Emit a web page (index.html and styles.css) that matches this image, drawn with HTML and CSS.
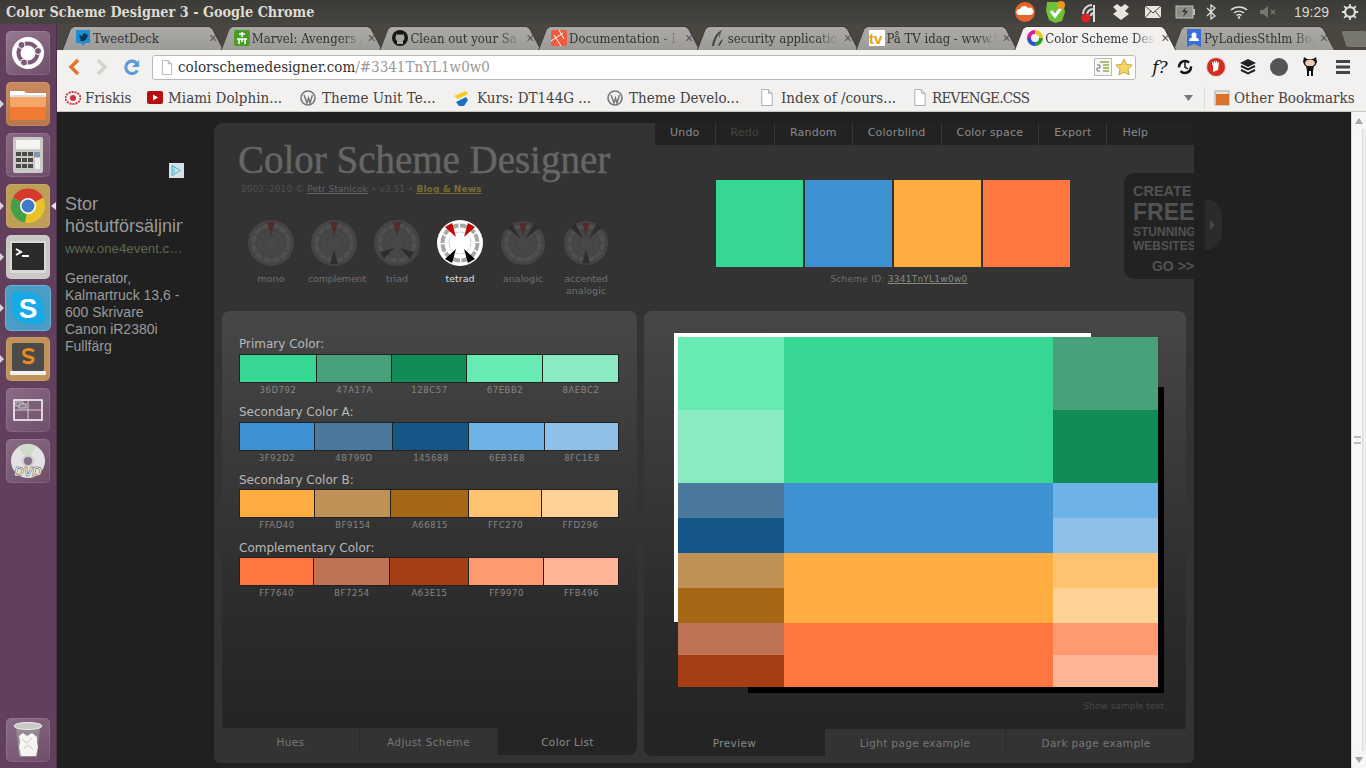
FILE: index.html
```html
<!DOCTYPE html>
<html lang="en">
<head>
<meta charset="utf-8">
<title>Color Scheme Designer 3</title>
<link rel="stylesheet" href="styles.css">
</head>
<body>
<svg class="defs" width="0" height="0" aria-hidden="true">
  <defs>
    <g id="wheel-base">
      <circle class="wb" r="23"/>
      <circle class="wr" r="17.5" pathLength="72" stroke-dasharray="5 1"/>
      <circle class="wi" r="11" pathLength="72" stroke-dasharray="5 1"/>
      <circle class="wc" r="6"/>
    </g>
  </defs>
  <symbol id="i-wp" viewBox="0 0 16 16">
    <circle cx="8" cy="8" r="7" fill="none" stroke="#777" stroke-width="1.6"/>
    <path d="M4 5l3 8 1.5-5 1.500 5 2.500-8" fill="none" stroke="#777" stroke-width="1.500"/>
  </symbol>
  <symbol id="i-page" viewBox="0 0 14 18">
    <path d="M1.500.5h7l4 4v13h-11z" fill="#fff" stroke="#aaa"/>
    <path d="M8.500.5v4h4" fill="#ddd" stroke="#aaa"/>
  </symbol>
</svg>

<div class="screen">
  <header class="topbar">
    <div class="wintitle">Color Scheme Designer 3 - Google Chrome</div>
    <div class="tray">
      <svg class="t1" width="22" height="22" viewBox="0 0 22 22"><circle cx="11" cy="11" r="10" fill="#e8622b"/><path d="M5 14a3 3 0 0 1 1-6 4.500 4.500 0 0 1 8-1 3.500 3.500 0 0 1 3 7z" fill="#fff"/></svg>
      <svg class="t2" width="22" height="24" viewBox="0 0 22 24"><path d="M2 2h16l2 10-3 9-7 2-6-3-3-9z" fill="#6fc13a"/><path d="M6 11l4 5 6-8" fill="none" stroke="#fff" stroke-width="3"/><circle cx="16" cy="5" r="4" fill="#e89a1e"/></svg>
      <svg class="t3" width="20" height="22" viewBox="0 0 20 22"><path d="M3 13a9 9 0 0 1 9-9M7 14a6 6 0 0 1 6-6M11 15a3 3 0 0 1 3-3M14 4v17" fill="none" stroke="#ddd" stroke-width="2"/><circle cx="6" cy="17" r="4.500" fill="#d22"/></svg>
      <svg class="t4" width="18" height="18" viewBox="0 0 18 18"><path d="M1 4l4-3 4 3 4-3 4 3-4 4 4 3-4 3-4 3-4-3-4-3 4-3z" fill="#e8e6df"/></svg>
      <svg class="t5" width="18" height="14" viewBox="0 0 18 14"><rect x="1" y="1" width="16" height="12" fill="#e8e6df"/><path d="M1 1l8 7 8-7M1 13l6-7M17 13l-6-7" fill="none" stroke="#4a4842"/></svg>
      <svg class="t6" width="21" height="14" viewBox="0 0 21 14"><rect x="1" y="1" width="17" height="12" fill="#8d8c85" stroke="#bbb"/><rect x="18" y="4" width="2" height="6" fill="#bbb"/><path d="M11 2l-4 5h3l-2 5 5-6h-3z" fill="#333"/></svg>
      <svg class="t7" width="10" height="16" viewBox="0 0 10 16"><path d="M1 4l8 8-4 3V1l4 3-8 8" fill="none" stroke="#ddd" stroke-width="1.300"/></svg>
      <svg class="t8" width="18" height="14" viewBox="0 0 18 14"><path d="M1 5a12 12 0 0 1 16 0M4 8a8 8 0 0 1 10 0M6.500 10.500a4 4 0 0 1 5 0" fill="none" stroke="#ddd" stroke-width="1.600"/><circle cx="9" cy="12.500" r="1.300" fill="#ddd"/></svg>
      <svg class="t9" width="18" height="14" viewBox="0 0 18 14"><path d="M1 5h3l5-4v12l-5-4H1z" fill="#77766f"/><path d="M12 5l4 4M16 5l-4 4" stroke="#77766f" stroke-width="1.300"/></svg>
      <span class="clock">19:29</span>
      <svg class="t10" width="18" height="20" viewBox="-10 -10 20 20"><circle r="5.500" fill="none" stroke="#ddd" stroke-width="2.500"/><path d="M0-9v4M0 9V5M-9 0h4M9 0H5M-6.500-6.500l3 3M6.500-6.500l-3 3M-6.500 6.500l3-3M6.500 6.500l-3-3" stroke="#ddd" stroke-width="2"/></svg>
    </div>
  </header>

  <div class="main">
    <nav class="launcher">
      <div class="tile tile-ubuntu"><svg width="34" height="34" viewBox="-17 -17 34 34"><circle r="16" fill="#fff"/><circle r="9.500" fill="none" stroke="#7c5a76" stroke-width="4"/><circle cx="10" cy="-2" r="3.500" fill="#7c5a76" stroke="#fff"/><circle cx="-6.500" cy="-8" r="3.500" fill="#7c5a76" stroke="#fff"/><circle cx="-4" cy="9.500" r="3.500" fill="#7c5a76" stroke="#fff"/></svg></div>
      <div class="tile tile-orange run"><svg width="38" height="34" viewBox="0 0 38 34"><path d="M1 4h14l2 2h20v4H1z" fill="#fff"/><rect x="2" y="8" width="34" height="3" fill="#ddd"/><rect x="1" y="10" width="36" height="23" rx="2" fill="#ee7a33"/><rect x="1" y="10" width="36" height="10" rx="2" fill="#f6a768"/></svg></div>
      <div class="tile tile-plain"><svg width="34" height="38" viewBox="0 0 34 38"><rect x="2" y="1" width="30" height="36" rx="2" fill="#c9c9c6"/><rect x="5" y="4" width="24" height="9" fill="#f4f4f2"/><g fill="#4a4a48"><rect x="5" y="16" width="5" height="4"/><rect x="11" y="16" width="5" height="4"/><rect x="17" y="16" width="5" height="4"/><rect x="5" y="22" width="5" height="4"/><rect x="11" y="22" width="5" height="4"/><rect x="17" y="22" width="5" height="4"/><rect x="5" y="28" width="5" height="4"/><rect x="11" y="28" width="5" height="4"/><rect x="17" y="28" width="5" height="4"/></g><rect x="23" y="16" width="6" height="5" fill="#7f99a8"/><rect x="24" y="22" width="5" height="11" fill="#eee"/></svg></div>
      <div class="tile tile-gold run run-both"><svg width="36" height="36" viewBox="-18 -18 36 36"><circle r="17" fill="#e8c22a"/><path d="M0 0L-15-8.500A17 17 0 0 1 15-8.500z" fill="#d63a2c"/><path d="M0 0L-15-8.500A17 17 0 0 0-3 16.700z" fill="#43a047"/><circle r="8" fill="#fff"/><circle r="6.500" fill="#3f7bc8"/></svg></div>
      <div class="tile tile-light run"><svg width="36" height="32" viewBox="0 0 36 32"><rect x="0" y="0" width="36" height="32" fill="#d9d9d6"/><rect x="2" y="2" width="32" height="27" fill="#2b2b2b"/><path d="M6 8l5 3-5 3" fill="none" stroke="#fff" stroke-width="2"/><rect x="12" y="14" width="7" height="2" fill="#fff"/></svg></div>
      <div class="tile tile-blue run"><svg width="38" height="38" viewBox="0 0 38 38"><circle cx="19" cy="19" r="16" fill="#17a9e8"/><circle cx="10" cy="10" r="8" fill="#17a9e8"/><circle cx="28" cy="28" r="8" fill="#17a9e8"/><text class="skype" x="19" y="29" text-anchor="middle">S</text></svg></div>
      <div class="tile tile-tan run"><svg width="38" height="36" viewBox="0 0 38 36"><rect x="3" y="2" width="32" height="28" rx="2" fill="#4a4a4a"/><rect x="1" y="30" width="36" height="4" rx="1" fill="#f0f0ee"/><path d="M25 10c-6-3-12-1-10 3s10 2 9 6-7 3-10 1" fill="none" stroke="#f08a1d" stroke-width="3"/></svg></div>
      <div class="tile tile-plain"><svg width="30" height="22" viewBox="0 0 30 22"><rect x="1" y="1" width="28" height="20" fill="none" stroke="#fff" stroke-width="1.500"/><path d="M15 1v20M1 11h28" stroke="#d8cdd6"/><rect x="3" y="3" width="7" height="4" fill="none" stroke="#ccc"/><rect x="6" y="5" width="7" height="4" fill="#8d7a8a" stroke="#ccc"/></svg></div>
      <div class="tile tile-plain"><svg width="36" height="38" viewBox="-18 -19 36 38"><circle r="17" fill="#e2e2e2"/><path d="M0 0L-10-14A17 17 0 0 1 8-15z" fill="#cfdcc8"/><circle r="5" fill="#86708a" stroke="#ccc" stroke-width="2"/><text class="dvd" x="0" y="15" text-anchor="middle">DVD</text></svg></div>
      <div class="tile tile-plain tile-trash"><svg width="32" height="38" viewBox="0 0 32 38"><path d="M4 7h24l-3 29H7z" fill="#a9aca6" opacity=".55"/><path d="M7 15l4-3 4 3 5-3 5 4 0 6 1 4-2 9H9l-2-9 1-5z" fill="#f4f4f2"/><path d="M10 18l5 4 5-5M12 27l5-3 4 5" fill="none" stroke="#c9c9c6"/><ellipse cx="16" cy="5" rx="14" ry="3.500" fill="#c7cac4" stroke="#eee"/></svg></div>
    </nav>

    <div class="browser">
      <div class="tabstrip">
        <div class="tab"><svg class="fav" width="16" height="18" viewBox="0 0 16 18"><path d="M1 1h14v13h-5l-2 3-2-3H1z" fill="#1a8fd6"/><path d="M12.500 5c-1 .5-2 .2-2.500-.5-1-.5-3 .5-2 2.500-2 0-3-1-3.500-2-.5 2 0 3 1 4l-1 0c.5 1 1 1.500 2 2-1 .5-1.500.5-2 .5 3 1.500 7 .5 8-4z" fill="#10344f"/></svg><span class="tab-t">TweetDeck</span><span class="tab-x">×</span></div>
        <div class="tab"><svg class="fav" width="16" height="16" viewBox="0 0 16 16"><rect width="16" height="16" rx="2" fill="#4b9e24"/><path d="M8 2v5M5 4h6M3 9h10M5 9v5M11 9v5M8 9v3" stroke="#fff" stroke-width="1.600"/></svg><span class="tab-t tab-fade">Marvel: Avengers /</span><span class="tab-x">×</span></div>
        <div class="tab"><svg class="fav" width="16" height="16" viewBox="0 0 16 16"><circle cx="8" cy="8" r="8" fill="#161616"/><path d="M5 14v-3c-1-1-1.500-2-1.500-3.500 0-.8.300-1.500.7-2V4l1.800.7c.6-.2 1.300-.3 2-.3s1.400.1 2 .3L11.800 4v1.500c.4.500.7 1.200.7 2 0 1.500-.5 2.500-1.500 3.500v3z" fill="#a6a5a1"/></svg><span class="tab-t tab-fade">Clean out your Sa</span><span class="tab-x">×</span></div>
        <div class="tab"><svg class="fav" width="16" height="16" viewBox="0 0 16 16"><rect width="16" height="16" rx="2" fill="#ef5b3c"/><path d="M0 11L12 3M3 5l7 11M8 0l5 9" stroke="#fff" fill="none"/></svg><span class="tab-t tab-fade">Documentation - L</span><span class="tab-x">×</span></div>
        <div class="tab"><svg class="fav" width="16" height="18" viewBox="0 0 16 18"><path d="M2 17C3 9 7 3 12 1c-2 3-2 6-2 8-1-1-1-3 0-5-3 3-5 8-6 13zM8 17c1-3 3-6 5-7-1 3-2 5-4 7z" fill="#444"/></svg><span class="tab-t tab-fade">security applicatio</span><span class="tab-x">×</span></div>
        <div class="tab"><svg class="fav" width="16" height="16" viewBox="0 0 16 16"><rect width="16" height="16" fill="#fff"/><text class="tvfav" x="0" y="14">tv</text></svg><span class="tab-t tab-fade">På TV idag - www.t</span><span class="tab-x">×</span></div>
        <div class="tab tab-on"><svg class="fav" width="16" height="16" viewBox="-8 -8 16 16"><path d="M0-8A8 8 0 0 1 8 0H4A4 4 0 0 0 0-4z" fill="#e8c81e"/><path d="M8 0A8 8 0 0 1 0 8V4A4 4 0 0 0 4 0z" fill="#2aa12a"/><path d="M0 8A8 8 0 0 1-8 0h4A4 4 0 0 0 0 4z" fill="#2a4fd0"/><path d="M-8 0A8 8 0 0 1 0-8v4A4 4 0 0 0-4 0z" fill="#d3229a"/></svg><span class="tab-t tab-fade">Color Scheme Desi</span><span class="tab-x">×</span></div>
        <div class="tab"><svg class="fav" width="16" height="18" viewBox="0 0 16 18"><path d="M1 0h14v18l-7-3-7 3z" fill="#3a6fd8"/><circle cx="8" cy="6" r="2.500" fill="#fff"/><path d="M3 12a5 4 0 0 1 10 0z" fill="#fff"/></svg><span class="tab-t tab-fade">PyLadiesSthlm Boa</span><span class="tab-x">×</span></div>
        <div class="tab-new"></div>
      </div>

      <div class="toolbar">
        <svg class="tb-back" width="14" height="20" viewBox="0 0 14 20"><path d="M11 3L4 10l7 7" fill="none" stroke="#e8742c" stroke-width="3.500"/></svg>
        <svg class="tb-fwd" width="14" height="20" viewBox="0 0 14 20"><path d="M3 3l7 7-7 7" fill="none" stroke="#d5d3cf" stroke-width="3.500"/></svg>
        <svg class="tb-reload" width="16" height="18" viewBox="0 0 18 18"><path d="M14.500 5A7 7 0 1 0 15 13" fill="none" stroke="#5b9bd8" stroke-width="3.500"/><path d="M17 1v8h-8z" fill="#5b9bd8"/></svg>
        <div class="omni">
          <svg class="omni-page" width="12" height="15"><use href="#i-page"/></svg>
          <span class="url">colorschemedesigner.com<span class="url-dim">/#3341TnYL1w0w0</span></span>
          <svg class="omni-rss" width="18" height="18" viewBox="0 0 18 18"><rect x=".5" y=".5" width="17" height="17" fill="#f7f7f5" stroke="#bbb"/><path d="M6 4h9M9 7h6M9 10h6M9 13h6" stroke="#8cb04a" stroke-width="1.500"/><path d="M3 7h3v3H3v3h3" fill="none" stroke="#777"/></svg>
          <svg class="omni-star" width="18" height="18" viewBox="0 0 18 18"><path d="M9 1l2.500 5.400 5.700.7-4.200 4 1.100 5.800L9 14.100l-5.100 2.800L5 11.100l-4.200-4 5.700-.7z" fill="#f7d565" stroke="#c9a53a"/></svg>
        </div>
        <div class="exts">
          <span class="ext-f">f?</span>
          <svg width="16" height="18" viewBox="-8 -9 16 18"><circle r="6" fill="none" stroke="#111" stroke-width="2.500" stroke-dasharray="14 4"/><path d="M0-5v5l3 2" stroke="#111" stroke-width="1.500" fill="none"/></svg>
          <svg width="20" height="20" viewBox="-10 -10 20 20"><circle r="9.500" fill="#d92c20" stroke="#ddd"/><path d="M-3 5v-6l-1-2v-2h1l1 2V-6h1v3l1-3h1v3l1-2h1l-1 8z" fill="#fff"/></svg>
          <svg width="18" height="18" viewBox="0 0 18 18"><path d="M9 1l8 4-8 4-8-4z" fill="#222"/><path d="M2 8l7 3.500L16 8M2 12l7 3.500 7-3.500" fill="none" stroke="#222" stroke-width="2"/></svg>
          <svg width="18" height="18" viewBox="0 0 18 18"><circle cx="9" cy="9" r="9" fill="#555"/></svg>
          <svg width="18" height="22" viewBox="0 0 18 22"><path d="M3 1l3 2h6l3-2 1 5-2 4H4L2 6z" fill="#111"/><ellipse cx="9" cy="7" rx="5" ry="3.500" fill="#f1c9ad"/><path d="M5 10h8l-1 5H6zM6 15h2v5H6zM10 15h2v5h-2z" fill="#111"/></svg>
          <svg width="14" height="16" viewBox="0 0 14 16"><path d="M0 2.500h14M0 8h14M0 13.500h14" stroke="#444" stroke-width="3"/></svg>
        </div>
      </div>

      <div class="bookmarks">
        <div class="bm bm-g4"><svg width="16" height="14" viewBox="0 0 16 14"><ellipse cx="8" cy="7" rx="7.500" ry="6" fill="none" stroke="#c8343e" stroke-width="2" stroke-dasharray="2 1"/><circle cx="8" cy="7" r="3" fill="#c8343e"/></svg><span>Friskis</span></div>
        <div class="bm"><svg width="16" height="13" viewBox="0 0 16 13"><rect width="16" height="13" rx="2" fill="#b41010"/><path d="M6 3.500l5 3-5 3z" fill="#fff"/></svg><span>Miami Dolphin...</span></div>
        <div class="bm bm-g6"><svg width="16" height="16"><use href="#i-wp"/></svg><span>Theme Unit Te...</span></div>
        <div class="bm bm-g8"><svg width="16" height="16" viewBox="0 0 16 16"><path d="M1 6l12-5 2 3L5 9z" fill="#f5cc1d"/><path d="M3 12l10-5 2 3-4 6H6z" fill="#1d6fc0"/></svg><span>Kurs: DT144G ...</span></div>
        <div class="bm bm-g6"><svg width="16" height="16"><use href="#i-wp"/></svg><span>Theme Develo...</span></div>
        <div class="bm bm-g7"><svg width="14" height="17"><use href="#i-page"/></svg><span>Index of /cours...</span></div>
        <div class="bm"><svg width="14" height="17"><use href="#i-page"/></svg><span class="bm-tight">REVENGE.CSS</span></div>
        <svg class="bm-chev" width="9" height="6" viewBox="0 0 9 6"><path d="M0 0h9L4.500 6z" fill="#777"/></svg>
        <div class="bm bm-other"><svg width="16" height="16" viewBox="0 0 16 16"><rect x="1" y="1" width="14" height="14" fill="#e8e6e2" stroke="#aaa"/><rect x="2" y="4" width="13" height="11" fill="#d9732c"/></svg><span>Other Bookmarks</span></div>
      </div>

      <div class="viewport">
        <div class="page">
          <aside class="ad">
            <svg class="ad-mark" width="15" height="15" viewBox="0 0 15 15"><rect width="15" height="15" fill="#d6e2e6"/><path d="M3 2.500l8.500 5L3 12.500z" fill="none" stroke="#3fb7d8"/><path d="M5 5.500v5" stroke="#3fb7d8"/><circle cx="5" cy="3.800" r=".7" fill="#3fb7d8"/></svg>
            <div class="ad-title">Stor höstutförsäljning</div>
            <div class="ad-url">www.one4event.c…</div>
            <div class="ad-body">Generator, Kalmartruck 13,6 - 600 Skrivare Canon iR2380i Fullfärg</div>
          </aside>

          <main class="app">
            <div class="head">
              <div class="head-left">
                <div class="logo">Color Scheme Designer</div>
                <div class="credit">2002–2010 © <a class="credit-link">Petr Stanicek</a> • v3.51 • <a class="credit-blog">Blog &amp; News</a></div>
                <div class="wheels">
                  <div class="wheel-item w-mono"><svg class="wheel" viewBox="-24 -24 48 48"><use href="#wheel-base"/><polygon class="wd-r" points="0,-7 -4,-21 4,-21"/></svg><span>mono</span></div>
                  <div class="wheel-item w-comp"><svg class="wheel" viewBox="-24 -24 48 48"><use href="#wheel-base"/><polygon class="wd-r" points="0,-7 -4,-21 4,-21"/><polygon class="wd-k" points="0,7 -4,21 4,21"/></svg><span>complement</span></div>
                  <div class="wheel-item w-triad"><svg class="wheel" viewBox="-24 -24 48 48"><use href="#wheel-base"/><polygon class="wd-r" points="0,-7 -4,-21 4,-21"/><polygon class="wd-k" points="-3,5 -17,9 -13,16"/><polygon class="wd-k" points="3,5 17,9 13,16"/></svg><span>triad</span></div>
                  <div class="wheel-item w-tetrad is-on"><svg class="wheel" viewBox="-24 -24 48 48"><use href="#wheel-base"/><polygon class="wd-r" points="-4,-6 -15,-16 -8,-20"/><polygon class="wd-r" points="4,-6 15,-16 8,-20"/><polygon class="wd-k" points="-4,6 -15,16 -8,20"/><polygon class="wd-k" points="4,6 15,16 8,20"/></svg><span>tetrad</span></div>
                  <div class="wheel-item w-ana"><svg class="wheel" viewBox="-24 -24 48 48"><use href="#wheel-base"/><polygon class="wd-r" points="0,-7 -4,-21 4,-21"/><polygon class="wd-k" points="-3,-5 -17,-16 -11,-20"/><polygon class="wd-k" points="3,-5 17,-16 11,-20"/></svg><span>analogic</span></div>
                  <div class="wheel-item w-acc"><svg class="wheel" viewBox="-24 -24 48 48"><use href="#wheel-base"/><polygon class="wd-r" points="0,-7 -4,-21 4,-21"/><polygon class="wd-k" points="-3,-5 -17,-16 -11,-20"/><polygon class="wd-k" points="3,-5 17,-16 11,-20"/><polygon class="wd-k" points="0,7 -4,21 4,21"/></svg><span>accented<br>analogic</span></div>
                </div>
              </div>
              <div class="head-right">
                <div class="menu">
                  <a>Undo</a><a class="menu-off">Redo</a><a>Random</a><a>Colorblind</a><a>Color space</a><a>Export</a><a>Help</a>
                </div>
                <div class="scheme">
                  <div class="scheme-swatches">
                    <div class="c-36D792"></div><div class="c-3F92D2"></div><div class="c-FFAD40"></div><div class="c-FF7640"></div>
                  </div>
                  <div class="scheme-id">Scheme ID: <a>3341TnYL1w0w0</a></div>
                </div>
              </div>
              <div class="promo">
                <div class="p-create">CREATE</div>
                <div class="p-free">FREE</div>
                <div class="p-stun">STUNNING<br>WEBSITES</div>
                <div class="p-go">GO &gt;&gt;</div>
              </div>
              <div class="promo-tab"></div>
            </div>

            <div class="panels">
              <section class="panel panel-list">
                <div class="panel-body list-body">
                  <div class="group">
                    <div class="group-label">Primary Color:</div>
                    <div class="swatches sw-p">
                      <div class="cell"><i class="c-36D792"></i><b>36D792</b></div>
                      <div class="cell"><i class="c-47A17A"></i><b>47A17A</b></div>
                      <div class="cell"><i class="c-128C57"></i><b>128C57</b></div>
                      <div class="cell"><i class="c-67EBB2"></i><b>67EBB2</b></div>
                      <div class="cell"><i class="c-8AEBC2"></i><b>8AEBC2</b></div>
                    </div>
                  </div>
                  <div class="group group-short">
                    <div class="group-label">Secondary Color A:</div>
                    <div class="swatches sw-a">
                      <div class="cell"><i class="c-3F92D2"></i><b>3F92D2</b></div>
                      <div class="cell"><i class="c-4B799D"></i><b>4B799D</b></div>
                      <div class="cell"><i class="c-145688"></i><b>145688</b></div>
                      <div class="cell"><i class="c-6EB3E8"></i><b>6EB3E8</b></div>
                      <div class="cell"><i class="c-8FC1E8"></i><b>8FC1E8</b></div>
                    </div>
                  </div>
                  <div class="group group-low">
                    <div class="group-label">Secondary Color B:</div>
                    <div class="swatches sw-b">
                      <div class="cell"><i class="c-FFAD40"></i><b>FFAD40</b></div>
                      <div class="cell"><i class="c-BF9154"></i><b>BF9154</b></div>
                      <div class="cell"><i class="c-A66815"></i><b>A66815</b></div>
                      <div class="cell"><i class="c-FFC270"></i><b>FFC270</b></div>
                      <div class="cell"><i class="c-FFD296"></i><b>FFD296</b></div>
                    </div>
                  </div>
                  <div class="group group-low">
                    <div class="group-label">Complementary Color:</div>
                    <div class="swatches sw-c">
                      <div class="cell"><i class="c-FF7640"></i><b>FF7640</b></div>
                      <div class="cell"><i class="c-BF7254"></i><b>BF7254</b></div>
                      <div class="cell"><i class="c-A63E15"></i><b>A63E15</b></div>
                      <div class="cell"><i class="c-FF9970"></i><b>FF9970</b></div>
                      <div class="cell"><i class="c-FFB496"></i><b>FFB496</b></div>
                    </div>
                  </div>
                </div>
                <div class="panel-tabs tabs-l">
                  <a>Hues</a><a>Adjust Scheme</a><a class="is-active">Color List</a>
                </div>
              </section>

              <section class="panel panel-preview">
                <div class="panel-body preview-body">
                  <div class="pv-white"></div>
                  <div class="pv-black"></div>
                  <div class="mosaic">
                    <div class="c-67EBB2"></div><div class="c-36D792 span2"></div><div class="c-47A17A"></div>
                    <div class="c-8AEBC2"></div><div class="c-128C57"></div>
                    <div class="c-4B799D"></div><div class="c-3F92D2 span2"></div><div class="c-6EB3E8"></div>
                    <div class="c-145688"></div><div class="c-8FC1E8"></div>
                    <div class="c-BF9154"></div><div class="c-FFAD40 span2"></div><div class="c-FFC270"></div>
                    <div class="c-A66815"></div><div class="c-FFD296"></div>
                    <div class="c-BF7254"></div><div class="c-FF7640 span2"></div><div class="c-FF9970"></div>
                    <div class="c-A63E15"></div><div class="c-FFB496"></div>
                  </div>
                  <div class="sample-link">Show sample text</div>
                </div>
                <div class="panel-tabs tabs-r">
                  <a class="is-active">Preview</a><a>Light page example</a><a>Dark page example</a>
                </div>
              </section>
            </div>
          </main>
        </div>
        <div class="scrollbar">
          <div class="sb-btn"><span class="sb-up"></span></div>
          <div class="sb-thumb"><span class="sb-grip"></span></div>
          <div class="sb-btn"><span class="sb-down"></span></div>
        </div>
      </div>
    </div>
  </div>
</div>
</body>
</html>
```

FILE: styles.css
```css
* { box-sizing: border-box; }
html, body { margin: 0; padding: 0; overflow: hidden; }
body { width: 1366px; height: 768px; font-family: "DejaVu Sans", sans-serif; }
a { text-decoration: none; }
.defs { position: absolute; }

.screen { width: 1366px; height: 768px; display: flex; flex-direction: column; }

/* Top bar */
.topbar {
  height: 24px; flex: none; display: flex; align-items: center; justify-content: space-between;
  background: linear-gradient(#3c3b37, #45443e);
  padding: 0 6px;
}
.wintitle { font: bold 14.300px "DejaVu Serif", serif; color: #dfdbd2; white-space: nowrap; font-stretch: condensed; }
.tray { display: flex; align-items: center; height: 24px; margin-right: 1px; }
.tray svg { flex: none; display: block; }
.t2 { margin-left: 9px; }
.t3 { margin-left: 13px; }
.t4 { margin-left: 12px; }
.t5 { margin-left: 14px; }
.t6 { margin-left: 13px; }
.t7 { margin-left: 10px; }
.t8 { margin-left: 14px; }
.t9 { margin-left: 11px; }
.clock { font: 14px "Liberation Sans", sans-serif; color: #d8d6cf; margin-left: 17px; width: 36px; }
.t10 { margin-left: 11px; }

.main { flex: 1; display: flex; min-height: 0; }

/* Launcher */
.launcher {
  width: 57px; flex: none; background: #623f5d; border-right: 1px solid #4b3148;
  display: flex; flex-direction: column; align-items: flex-start; padding: 7px 0 6px 6px; gap: 7px;
}
.tile {
  width: 44px; height: 44px; border-radius: 5px; display: flex; align-items: center; justify-content: center;
  position: relative; flex: none;
  background: linear-gradient(145deg, #8a6b85, #6e4e69);
  box-shadow: inset 0 0 0 1px rgba(255,255,255,.1);
}
.tile-ubuntu { background: linear-gradient(145deg, #957a90, #6f4f6a); }
.tile-orange { background: linear-gradient(#c88a5c, #b8784c); }
.tile-gold { background: #bf9f55; }
.tile-light { background: #c8c8c6; }
.tile-blue { background: #4a9dc4; box-shadow: 0 0 0 1px #62b8dc; }
.tile-tan { background: #c0935a; }
.tile-trash { margin-top: auto; }
.run::before {
  content: ""; position: absolute; left: -6px; top: 18px;
  border-left: 4px solid #d8d2d8; border-top: 4px solid transparent; border-bottom: 4px solid transparent;
}
.run-both::after {
  content: ""; position: absolute; right: -6px; top: 18px;
  border-right: 5px solid #e4e0e4; border-top: 4px solid transparent; border-bottom: 4px solid transparent;
}
.skype { font: bold 28px "Liberation Sans", sans-serif; fill: #fff; }
.dvd { font: italic bold 13px "Liberation Sans", sans-serif; fill: #fff; stroke: #444; stroke-width: .5px; }

/* Browser */
.browser { flex: 1; min-width: 0; display: flex; flex-direction: column; background: #f2f1f0; }

.tabstrip {
  height: 26px; flex: none; display: flex; align-items: flex-end; background: #49473f;
  padding-left: 3px; overflow: hidden;
}
.tab {
  width: 166px; height: 24px; margin-right: -7.300px; flex: none; position: relative;
  display: flex; align-items: center; padding: 0 6px 0 15px; gap: 2px;
  background: #3d3c38;
  clip-path: polygon(0 100%, 2px 100%, 11px 2px, 14px 0, 150px 0, 153px 2px, 164px 100%, 166px 100%);
}
.tab::before {
  content: ""; position: absolute; inset: 1px 1px 0 1px; background: linear-gradient(#abaaa6, #9c9b97);
  clip-path: polygon(0 100%, 2px 100%, 10px 2px, 13px 0, 148px 0, 151px 2px, 162px 100%, 164px 100%);
}
.tab > * { position: relative; }
.tab-on { z-index: 2; }
.tab-on::before { background: #f2f1f0; }
.fav { flex: none; display: block; }
.tab-t {
  flex: 1; min-width: 0; margin-left: 0; white-space: nowrap; overflow: hidden;
  font: 13px "DejaVu Serif", serif; font-stretch: condensed; color: #333;
}
.tab-fade { -webkit-mask-image: linear-gradient(to right, #000 80%, transparent 100%); mask-image: linear-gradient(to right, #000 80%, transparent 100%); }
.tab-x { font: 14px "Liberation Sans", sans-serif; color: #555; width: 14px; text-align: center; flex: none; }
.tvfav { font: bold 15px "Liberation Sans", sans-serif; fill: #e8a011; }
.tab-new {
  width: 25px; height: 16px; margin-left: 14px; margin-bottom: 3px; flex: none; background: #77766f;
  border-radius: 2px; transform: skewX(18deg);
}

.toolbar { height: 34px; flex: none; display: flex; align-items: center; }
.toolbar svg { display: block; flex: none; }
.tb-back { margin-left: 10px; }
.tb-fwd { margin-left: 14px; }
.tb-reload { margin-left: 15px; }
.omni {
  width: 984px; height: 25px; margin-left: 12px; background: #fff; border: 1px solid #b9b8b4; border-radius: 3px;
  display: flex; align-items: center; padding: 0 2px 0 8px;
}
.omni-page { margin-right: 5px; }
.url { flex: 1; font: 15px "DejaVu Serif", serif; font-stretch: condensed; color: #333; white-space: nowrap; }
.url-dim { color: #999; }
.omni-rss { margin-right: 3px; }
.exts { flex: 1; display: grid; grid-template-columns: 32px 18px 44px 20px 42px 20px 46px; padding-left: 8px; align-items: center; justify-items: center; }
.ext-f { font: italic 17px "DejaVu Serif", serif; color: #111; }

.bookmarks {
  height: 28px; flex: none; display: grid; align-items: center;
  grid-template-columns: 82px 153px 153px 154px 153px 153px 271px 20px 1fr;
  padding-left: 8px; border-bottom: 1px solid #c8c7c3;
}
.bm { display: flex; align-items: center; gap: 5px; white-space: nowrap; font: 15px "DejaVu Serif", serif; font-stretch: condensed; color: #444; }
.bm svg { display: block; flex: none; }
.bm-tight { letter-spacing: -.7px; }
.bm-g4 { gap: 4px; }
.bm-g6 { gap: 6px; }
.bm-g7 { gap: 7px; }
.bm-g8 { gap: 8px; }
.bm-chev { display: block; }
.bm-other { border-left: 1px solid #dcdbd7; height: 22px; padding-left: 9px; gap: 4px; }

.viewport { flex: 1; min-height: 0; display: flex; }
.page { flex: 1; min-width: 0; display: flex; background: #202020; }
.scrollbar { width: 15px; flex: none; display: flex; flex-direction: column; background: #ededeb; border-left: 1px solid #d8d8d6; }
.sb-btn { height: 17px; flex: none; display: flex; align-items: center; justify-content: center; background: #f6f6f4; }
.sb-up { border: 4px solid transparent; border-bottom: 6px solid #a5a5a3; border-top: 0; }
.sb-down { border: 4px solid transparent; border-top: 6px solid #a5a5a3; border-bottom: 0; }
.sb-thumb { flex: 1; margin: 0 3px 0 0; background: #f7f7f6; border-right: 1px solid #dfdfdd; display: flex; align-items: center; justify-content: center; }
.sb-grip { width: 7px; height: 8px; border-top: 2px solid #bbb; border-bottom: 2px solid #bbb; }

/* Ad column */
.ad { width: 157px; flex: none; position: relative; padding: 81px 0 0 8px; font-family: "Liberation Sans", sans-serif; color: #9a9a9a; overflow: hidden; }
.ad-mark { position: absolute; left: 112px; top: 51px; display: block; }
.ad-title { width: 118px; font-size: 18px; line-height: 22px; overflow: hidden; }
.ad-url { font-size: 13.300px; line-height: 16px; color: #5d6850; margin-top: 4px; white-space: nowrap; }
.ad-body { width: 120px; margin-top: 13px; font-size: 14px; line-height: 17px; }

/* App */
.app { width: 980px; height: 640px; margin-top: 11px; flex: none; background: #333; border-radius: 9px 0 6px 6px; display: flex; flex-direction: column; }
.head { height: 188px; flex: none; display: flex; position: relative; }
.head-left { width: 441px; flex: none; padding: 0 0 0 24px; }
.logo { font: 39px/1 "Liberation Serif", serif; color: #666; -webkit-text-stroke: .45px #666; margin-top: 17px; letter-spacing: -.02px; white-space: nowrap; height: 40px; }
.credit { font-size: 9px; letter-spacing: .1px; color: #4f4f4f; margin: 4px 0 0 3px; line-height: 11px; white-space: nowrap; }
.credit-link { color: #626262; text-decoration: underline; }
.credit-blog { color: #7a6b34; font-weight: bold; text-decoration: underline; }
.wheels { display: grid; grid-template-columns: 63px 63px 63px 63px 63px 63px; margin: 24px 0 0 1.500px; width: 380px; }
.wheel-item { display: flex; flex-direction: column; align-items: center; text-align: center; font-size: 9.500px; line-height: 12px; color: #6f6f6f; }
.wheel-item span { margin-top: 6px; }
.w-comp span { margin-left: 6px; letter-spacing: -.15px; }
.wheel { display: block; width: 48px; height: 48px; --wb: #454545; --wr: #505050; --wi: #4c4c4c; --wc: #484848; --wdr: #562a2a; --wdk: #2e2e2e; }
.w-ana .wheel, .w-acc .wheel { width: 46px; height: 48px; }
.is-on { color: #d8dde4; }
.is-on .wheel { --wb: #fff; --wr: #a8a8a8; --wi: #c8c8c8; --wc: #fff; --wdr: #c40000; --wdk: #000; }
.wb { fill: var(--wb); }
.wr { fill: none; stroke: var(--wr); stroke-width: 4px; }
.wi { fill: none; stroke: var(--wi); stroke-width: 1px; }
.wc { fill: var(--wc); }
.wd-r { fill: var(--wdr); }
.wd-k { fill: var(--wdk); }

.head-right { flex: 1; min-width: 0; display: flex; flex-direction: column; }
.menu { height: 22px; flex: none; display: flex; background: #222; }
.menu a { padding: 0 15px; font-size: 11px; line-height: 20px; color: #8a8a8a; border-right: 1px solid #383838; white-space: nowrap; letter-spacing: .2px; }
.menu a:last-child { border-right: 0; }
.menu .menu-off { color: #444; }
.scheme { width: 354px; margin: 35px 0 0 61px; }
.scheme-swatches { display: grid; grid-template-columns: repeat(4, 87px); gap: 2px; height: 87px; }
.scheme-id { margin-top: 7px; padding-left: 12px; text-align: center; font-size: 9px; letter-spacing: .25px; color: #6e6e6e; line-height: 11px; }
.scheme-id a { color: #8a8a80; text-decoration: underline; }

.promo {
  position: absolute; right: 0; top: 50px; width: 70px; height: 106px; background: #222; border-radius: 10px 0 0 10px;
  padding: 11px 0 0 9px; font: bold 14px "Liberation Sans", sans-serif; color: #525252; overflow: hidden; white-space: nowrap;
}
.p-create { font-size: 14.500px; line-height: 14px; }
.p-free { font-size: 23px; line-height: 28px; }
.p-stun { font-size: 12px; line-height: 13.500px; }
.p-go { margin-top: 6px; font-size: 14px; line-height: 14px; text-align: right; }
.promo-tab { position: absolute; left: 991px; top: 76px; width: 17px; height: 51px; background: #2b2b2b; border-radius: 0 26px 26px 0 / 0 26px 26px 0; }
.promo-tab::after { content: ""; position: absolute; left: 5px; top: 21px; border-left: 5px solid #484848; border-top: 5px solid transparent; border-bottom: 5px solid transparent; }

/* Panels */
.panels { height: 445px; flex: none; display: flex; gap: 7px; padding: 0 8px; }
.panel { display: flex; flex-direction: column; min-width: 0; }
.panel-list { width: 415px; height: 444px; }
.panel-preview { width: 542px; height: 445px; }
.panel-body {
  flex: 1; min-height: 0; border-radius: 8px 8px 0 0;
  background: linear-gradient(#474747, #2c2c2c 70%, #242424);
}
.panel-tabs { flex: none; height: 27px; display: grid; font-size: 10.500px; letter-spacing: .35px; color: #777; border-radius: 0 0 8px 8px; }
.panel-tabs a { display: flex; align-items: center; justify-content: center; border-right: 1px solid #2a2a2a; color: #777; }
.panel-tabs a:last-child { border-right: 0; }
.panel-tabs .is-active { background: #242424; border-right: 0; color: #8a8a8a; border-radius: 0 0 0 8px; }
.tabs-l { grid-template-columns: 138px 138px 139px; }
.tabs-l .is-active { border-radius: 0 0 8px 0; }
.tabs-r { grid-template-columns: 181px 181px 180px; }

.list-body { padding: 26px 18px 0 17px; }
.group { height: 68px; display: flex; flex-direction: column; }
.group-short { height: 67px; }
.group-label { height: 17px; flex: none; font-size: 12px; line-height: 14px; color: #b8b8b8; white-space: nowrap; }
.group-low .group-label { line-height: 16px; }
.swatches { display: grid; height: 44px; }
.sw-p { grid-template-columns: 78px 75px 75px 76px 76px; }
.sw-a { grid-template-columns: 76px 78px 76px 76px 74px; }
.sw-b { grid-template-columns: 76px 76px 78px 73px 77px; }
.sw-c { grid-template-columns: 75px 76px 79px 75px 75px; }
.cell { display: flex; flex-direction: column; align-items: center; min-width: 0; }
.cell i { display: block; width: 100%; height: 29px; border: solid #222; border-width: 1px 1px 1px 0; flex: none; }
.cell:first-child i { border-left-width: 1px; }
.cell b { font-weight: normal; font-size: 8.500px; letter-spacing: .55px; line-height: 14px; color: #858585; }

.preview-body { position: relative; padding: 26px 0 0 34px; }
.pv-white { position: absolute; left: 30px; top: 22px; width: 417px; height: 289px; background: #fff; }
.pv-black { position: absolute; left: 104px; top: 76px; width: 416px; height: 306px; background: #000; }
.mosaic {
  position: relative; width: 480px; height: 350px; display: grid;
  grid-template-columns: 106px 269px 105px;
  grid-template-rows: 73px 73px 35px 35px 35px 35px 32px 32px;
}
.span2 { grid-row: span 2; }
.sample-link { position: relative; width: 486px; margin-top: 14px; text-align: right; font-size: 9px; color: #484848; line-height: 11px; }

/* Palette */
.c-36D792 { background: #36D792; }
.c-47A17A { background: #47A17A; }
.c-128C57 { background: #128C57; }
.c-67EBB2 { background: #67EBB2; }
.c-8AEBC2 { background: #8AEBC2; }
.c-3F92D2 { background: #3F92D2; }
.c-4B799D { background: #4B799D; }
.c-145688 { background: #145688; }
.c-6EB3E8 { background: #6EB3E8; }
.c-8FC1E8 { background: #8FC1E8; }
.c-FFAD40 { background: #FFAD40; }
.c-BF9154 { background: #BF9154; }
.c-A66815 { background: #A66815; }
.c-FFC270 { background: #FFC270; }
.c-FFD296 { background: #FFD296; }
.c-FF7640 { background: #FF7640; }
.c-BF7254 { background: #BF7254; }
.c-A63E15 { background: #A63E15; }
.c-FF9970 { background: #FF9970; }
.c-FFB496 { background: #FFB496; }
```
